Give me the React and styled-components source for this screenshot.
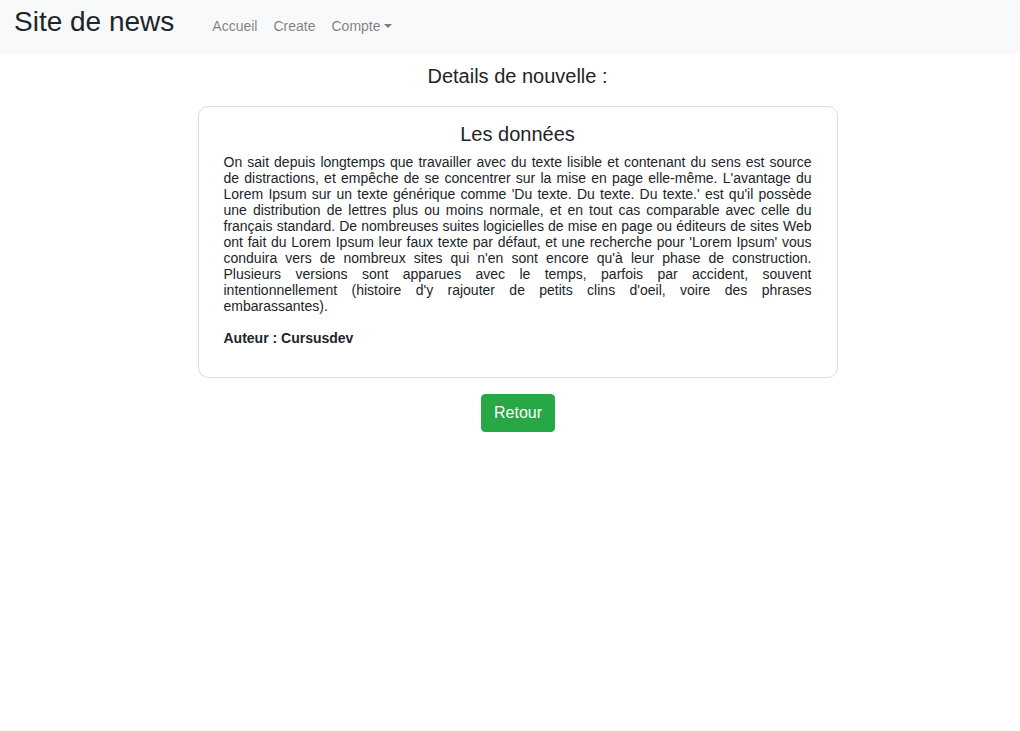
import React from "react";
import styled, { createGlobalStyle } from "styled-components";

const GlobalStyle = createGlobalStyle`
  html, body {
    margin: 0;
    padding: 0;
    background: #fff;
  }
  body {
    font-family: "Liberation Sans", Arial, sans-serif;
    color: #212529;
  }
`;

const Navbar = styled.nav`
  height: 54px;
  box-sizing: border-box;
  background: #f8f9fa;
  display: flex;
  align-items: baseline;
  padding: 8px 14px 0;
`;

const Brand = styled.a`
  font-size: 28px;
  line-height: 1;
  color: #212529;
  text-decoration: none;
  margin-right: 30px;
`;

const NavList = styled.ul`
  display: flex;
  list-style: none;
  margin: 0;
  padding: 0;
`;

const NavLink = styled.a`
  font-size: 14px;
  line-height: 1;
  padding: 0 8px;
  color: rgba(0, 0, 0, 0.5);
  text-decoration: none;

  ${(p) =>
    p.$dropdown &&
    `
    &::after {
      content: "";
      display: inline-block;
      margin-left: 3.6px;
      vertical-align: 3px;
      border-top: 4.2px solid;
      border-right: 4.2px solid transparent;
      border-left: 4.2px solid transparent;
      border-bottom: 0;
    }
  `}
`;

const Main = styled.main`
  display: flex;
  flex-direction: column;
  align-items: center;
  padding-left: 15px;
`;

const PageTitle = styled.h4`
  font-size: 20px;
  font-weight: 400;
  line-height: 24px;
  margin: 10px 0 18px;
`;

const Card = styled.section`
  width: 640px;
  box-sizing: border-box;
  border: 1px solid #dcdcdc;
  border-radius: 10px;
  padding: 15px 25px 15px;
`;

const CardTitle = styled.h5`
  font-size: 20px;
  font-weight: 400;
  line-height: 24px;
  text-align: center;
  margin: 0 0 8px;
`;

const Text = styled.p`
  font-size: 14px;
  line-height: 16px;
  text-align: justify;
  margin: 0 0 16px;
  font-weight: ${(p) => (p.$bold ? 700 : 400)};
`;

const Button = styled.button`
  margin-top: 16px;
  margin-left: 1px;
  font-family: inherit;
  font-size: 16px;
  line-height: 24px;
  padding: 6px 12px;
  color: #fff;
  background: #28a745;
  border: 1px solid #28a745;
  border-radius: 4px;
  cursor: pointer;
`;

const content =
  "On sait depuis longtemps que travailler avec du texte lisible et contenant du sens est source de distractions, et empêche de se concentrer sur la mise en page elle-même. L'avantage du Lorem Ipsum sur un texte générique comme 'Du texte. Du texte. Du texte.' est qu'il possède une distribution de lettres plus ou moins normale, et en tout cas comparable avec celle du français standard. De nombreuses suites logicielles de mise en page ou éditeurs de sites Web ont fait du Lorem Ipsum leur faux texte par défaut, et une recherche pour 'Lorem Ipsum' vous conduira vers de nombreux sites qui n'en sont encore qu'à leur phase de construction. Plusieurs versions sont apparues avec le temps, parfois par accident, souvent intentionnellement (histoire d'y rajouter de petits clins d'oeil, voire des phrases embarassantes).";

export default function App() {
  return (
    <>
      <GlobalStyle />
      <Navbar>
        <Brand href="#">Site de news</Brand>
        <NavList>
          <li>
            <NavLink href="#">Accueil</NavLink>
          </li>
          <li>
            <NavLink href="#">Create</NavLink>
          </li>
          <li>
            <NavLink href="#" $dropdown>
              Compte
            </NavLink>
          </li>
        </NavList>
      </Navbar>
      <Main>
        <PageTitle>Details de nouvelle :</PageTitle>
        <Card>
          <CardTitle>Les données</CardTitle>
          <Text>{content}</Text>
          <Text $bold>Auteur : Cursusdev</Text>
        </Card>
        <Button>Retour</Button>
      </Main>
    </>
  );
}
